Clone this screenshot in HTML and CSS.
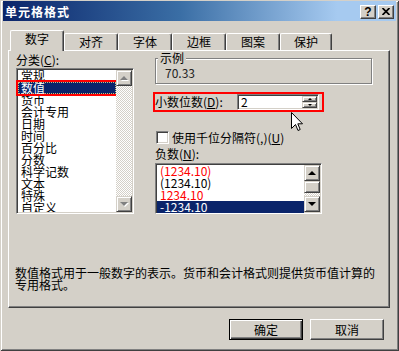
FILE: index.html
```html
<!DOCTYPE html>
<html lang="zh-CN">
<head>
    <meta charset="UTF-8">
    <title>单元格格式</title>
    <link rel="stylesheet" href="styles.css">
</head>
<body>
    <div class="window">
        <div class="titlebar">
            <span class="title">单元格格式</span>
            <div class="title-btns">
                <span class="tbtn help">?</span>
                <span class="tbtn">
                    <svg width="8" height="7" viewBox="0 0 8 7"><path d="M0.5 0 L7.5 7 M7.5 0 L0.5 7" stroke="#000" stroke-width="1.7"/></svg>
                </span>
            </div>
        </div>

        <div class="tabs">
            <div class="tab active">数字</div>
            <div class="tab">对齐</div>
            <div class="tab">字体</div>
            <div class="tab">边框</div>
            <div class="tab">图案</div>
            <div class="tab last">保护</div>
        </div>

        <div class="panel">
            <div class="cols">
                <div class="left">
                    <div class="label">分类(<u>C</u>):</div>
                    <div class="listbox cat">
                        <ul class="items">
                            <li>常规</li>
                            <li class="selected marked">数值</li>
                            <li>货币</li>
                            <li>会计专用</li>
                            <li>日期</li>
                            <li>时间</li>
                            <li>百分比</li>
                            <li>分数</li>
                            <li>科学记数</li>
                            <li>文本</li>
                            <li>特殊</li>
                            <li>自定义</li>
                        </ul>
                        <div class="scrollbar">
                            <div class="sbtn"><span class="arrow up off"></span></div>
                            <div class="track"></div>
                            <div class="sbtn"><span class="arrow down off"></span></div>
                        </div>
                    </div>
                </div>

                <div class="right">
                    <fieldset class="group">
                        <legend>示例</legend>
                        <div class="sample">70.33</div>
                    </fieldset>

                    <div class="decimals">
                        <span>小数位数(<u>D</u>):</span>
                        <div class="spin">
                            <span class="spin-val">2</span>
                            <div class="spin-btns">
                                <div class="spin-btn"><span class="arrow up small"></span></div>
                                <div class="spin-btn"><span class="arrow down small"></span></div>
                            </div>
                        </div>
                    </div>

                    <div class="check">
                        <span class="box"></span>
                        <span>使用千位分隔符(,)(<u>U</u>)</span>
                    </div>

                    <div class="label neg-label">负数(<u>N</u>):</div>
                    <div class="listbox neg">
                        <ul class="items">
                            <li class="red">(1234.10)</li>
                            <li>(1234.10)</li>
                            <li class="red">1234.10</li>
                            <li class="selected">-1234.10</li>
                        </ul>
                        <div class="scrollbar">
                            <div class="sbtn"><span class="arrow up"></span></div>
                            <div class="thumb"></div>
                            <div class="track"></div>
                            <div class="sbtn"><span class="arrow down"></span></div>
                        </div>
                    </div>
                </div>
            </div>

            <p class="desc">数值格式用于一般数字的表示。货币和会计格式则提供货币值计算的<br>专用格式。</p>
        </div>

        <div class="buttons">
            <button class="btn default">确定</button>
            <button class="btn">取消</button>
        </div>

        <svg class="cursor" width="13" height="20" viewBox="0 0 13 20">
            <path d="M0.5 0.5 V16.5 L4.5 12.5 L7 18.5 L9.2 17.5 L6.8 11.8 H11.5 Z" fill="#fff" stroke="#000" stroke-width="1"/>
        </svg>
    </div>
</body>
</html>
```

FILE: styles.css
```css
body {
    margin: 0;
    font-family: "Noto Sans CJK SC", sans-serif;
    font-size: 12px;
    color: #000;
    background: #d4d0c8;
}

ul {
    list-style: none;
    margin: 0;
    padding: 0;
}

.window {
    position: relative;
    box-sizing: border-box;
    width: 399px;
    height: 351px;
    padding: 1px 3px 3px 3px;
    background: #d4d0c8;
    box-shadow: inset 1px 1px 0 #d4d0c8, inset -1px -1px 0 #404040,
                inset 2px 2px 0 #fff, inset -2px -2px 0 #808080;
}

/* title bar */
.titlebar {
    display: flex;
    align-items: center;
    justify-content: space-between;
    height: 20px;
    padding: 1px 2px 0 2px;
    box-sizing: border-box;
    background: linear-gradient(to right, #0a246a, #3a6ea5 45%, #a6caf0 85%);
}

.title {
    color: #fff;
    font-weight: bold;
    letter-spacing: 1px;
    line-height: 14px;
}

.title-btns {
    display: flex;
    gap: 2px;
}

.tbtn {
    display: flex;
    align-items: center;
    justify-content: center;
    box-sizing: border-box;
    width: 16px;
    height: 14px;
    background: #d4d0c8;
    border: 1px solid;
    border-color: #fff #404040 #404040 #fff;
    box-shadow: inset -1px -1px 0 #808080;
}

.tbtn.help {
    font-family: "Liberation Sans", sans-serif;
    font-weight: bold;
    font-size: 12px;
    line-height: 12px;
}

/* tabs */
.tabs {
    display: flex;
    align-items: flex-end;
    height: 20px;
    margin-top: 9px;
    padding-left: 7px;
}

.tab {
    box-sizing: border-box;
    width: 54px;
    height: 17px;
    padding-top: 2px;
    line-height: 12px;
    text-align: center;
    background: #d4d0c8;
    border-top: 1px solid #fff;
    border-left: 1px solid #fff;
    border-right: 1px solid #404040;
    border-radius: 2px 2px 0 0;
    box-shadow: inset -1px 0 0 #808080;
}

.tab.last {
    width: 52px;
}

.tab.active {
    position: relative;
    z-index: 1;
    height: 21px;
    margin-bottom: -1px;
    padding-top: 2px;
}

/* panel */
.panel {
    box-sizing: border-box;
    width: 382px;
    height: 258px;
    margin-left: 5px;
    padding: 1px 0 0 7px;
    border-top: 1px solid #fff;
    border-left: 1px solid #fff;
    border-right: 1px solid #404040;
    border-bottom: 1px solid #404040;
    box-shadow: inset -1px -1px 0 #808080;
}

.cols {
    display: grid;
    grid-template-columns: 118px 217px;
    column-gap: 21px;
}

.label {
    line-height: 12px;
    margin-top: 2px;
}

u {
    text-decoration: underline;
    text-underline-offset: 1px;
}

/* list boxes */
.listbox {
    display: flex;
    box-sizing: border-box;
    margin-top: 2px;
    padding: 1px;
    background: #fff;
    border: 1px solid;
    border-color: #808080 #fff #fff #808080;
    box-shadow: inset 1px 1px 0 #404040, inset -1px -1px 0 #d4d0c8;
}

.listbox.cat {
    width: 118px;
    height: 146px;
}

.listbox .items {
    flex: 1;
}

.items li {
    box-sizing: border-box;
    height: 12px;
    line-height: 12px;
    padding-left: 3px;
    white-space: nowrap;
}

.cat li:last-child {
    height: 10px;
    overflow: hidden;
}

.items li.selected {
    background: #0a246a;
    color: #fff;
}

.items li.marked {
    border: 1px dotted #c8c080;
    padding-left: 2px;
    line-height: 10px;
    outline: 2px solid #f00;
    outline-offset: 0;
}

.items li.red {
    color: #f00;
}

.scrollbar {
    display: flex;
    flex-direction: column;
    width: 16px;
}

.sbtn,
.thumb,
.spin-btn {
    display: flex;
    align-items: center;
    justify-content: center;
    box-sizing: border-box;
    background: #d4d0c8;
    border: 1px solid;
    border-color: #d4d0c8 #404040 #404040 #d4d0c8;
    box-shadow: inset 1px 1px 0 #fff, inset -1px -1px 0 #808080;
}

.sbtn {
    height: 16px;
}

.thumb {
    height: 12px;
}

.track {
    flex: 1;
    background: repeating-conic-gradient(#fff 0% 25%, #d4d0c8 0% 50%) 0 0 / 2px 2px;
}

.arrow {
    width: 0;
    height: 0;
    border-left: 4px solid transparent;
    border-right: 4px solid transparent;
}

.arrow.up {
    border-bottom: 4px solid #000;
}

.arrow.down {
    border-top: 4px solid #000;
}

.arrow.off.up {
    border-bottom-color: #808080;
    filter: drop-shadow(1px 1px 0 #fff);
}

.arrow.off.down {
    border-top-color: #808080;
    filter: drop-shadow(1px 1px 0 #fff);
}

.arrow.small {
    border-left-width: 2px;
    border-right-width: 2px;
}

.arrow.small.up {
    border-bottom-width: 2px;
}

.arrow.small.down {
    border-top-width: 2px;
}

/* right column */
.group {
    margin: 0;
    padding: 0;
    min-width: 0;
    border: 1px solid #808080;
    box-shadow: inset 1px 1px 0 #fff, 1px 1px 0 #fff;
}

.group legend {
    margin-left: 2px;
    padding: 0 2px;
    line-height: 12px;
    background: #d4d0c8;
}

.sample {
    padding: 3px 0 4px 9px;
    line-height: 12px;
    color: #222;
}

.decimals {
    display: flex;
    align-items: center;
    box-sizing: border-box;
    width: 171px;
    height: 20px;
    margin: 8px 0 0 -2px;
    border: 2px solid #f00;
    line-height: 12px;
}

.spin {
    display: flex;
    box-sizing: border-box;
    width: 82px;
    height: 16px;
    margin: 0 3px 0 auto;
    padding: 1px;
    background: #fff;
    border: 1px solid;
    border-color: #808080 #fff #fff #808080;
    box-shadow: inset 1px 1px 0 #404040, inset -1px -1px 0 #d4d0c8;
}

.spin-val {
    flex: 1;
    padding-left: 2px;
    line-height: 12px;
}

.spin-btns {
    display: flex;
    flex-direction: column;
    width: 15px;
}

.spin-btn {
    height: 6px;
}

.check {
    display: flex;
    align-items: center;
    gap: 3px;
    height: 13px;
    margin: 19px 0 0 1px;
    line-height: 13px;
}

.check .box {
    box-sizing: border-box;
    width: 13px;
    height: 13px;
    background: #fff;
    border: 1px solid;
    border-color: #808080 #fff #fff #808080;
    box-shadow: inset 1px 1px 0 #404040, inset -1px -1px 0 #d4d0c8;
}

.neg-label {
    margin-top: 4px;
}

.listbox.neg {
    width: 167px;
    height: 51px;
    margin-top: 3px;
}

.desc {
    margin: 53px 0 0 -1px;
    line-height: 12px;
}

/* buttons */
.buttons {
    display: flex;
    justify-content: flex-end;
    gap: 7px;
    margin-top: 11px;
    padding-right: 12px;
}

.btn {
    box-sizing: border-box;
    width: 74px;
    height: 21px;
    padding: 0;
    font-family: inherit;
    font-size: 12px;
    line-height: 12px;
    color: #000;
    background: #d4d0c8;
    border: 1px solid;
    border-color: #fff #404040 #404040 #fff;
    box-shadow: inset -1px -1px 0 #808080;
}

.btn.default {
    border-color: #000;
    box-shadow: inset 1px 1px 0 #fff, inset -1px -1px 0 #404040, inset -2px -2px 0 #808080;
}

.cursor {
    position: absolute;
    left: 291px;
    top: 112px;
}
```
